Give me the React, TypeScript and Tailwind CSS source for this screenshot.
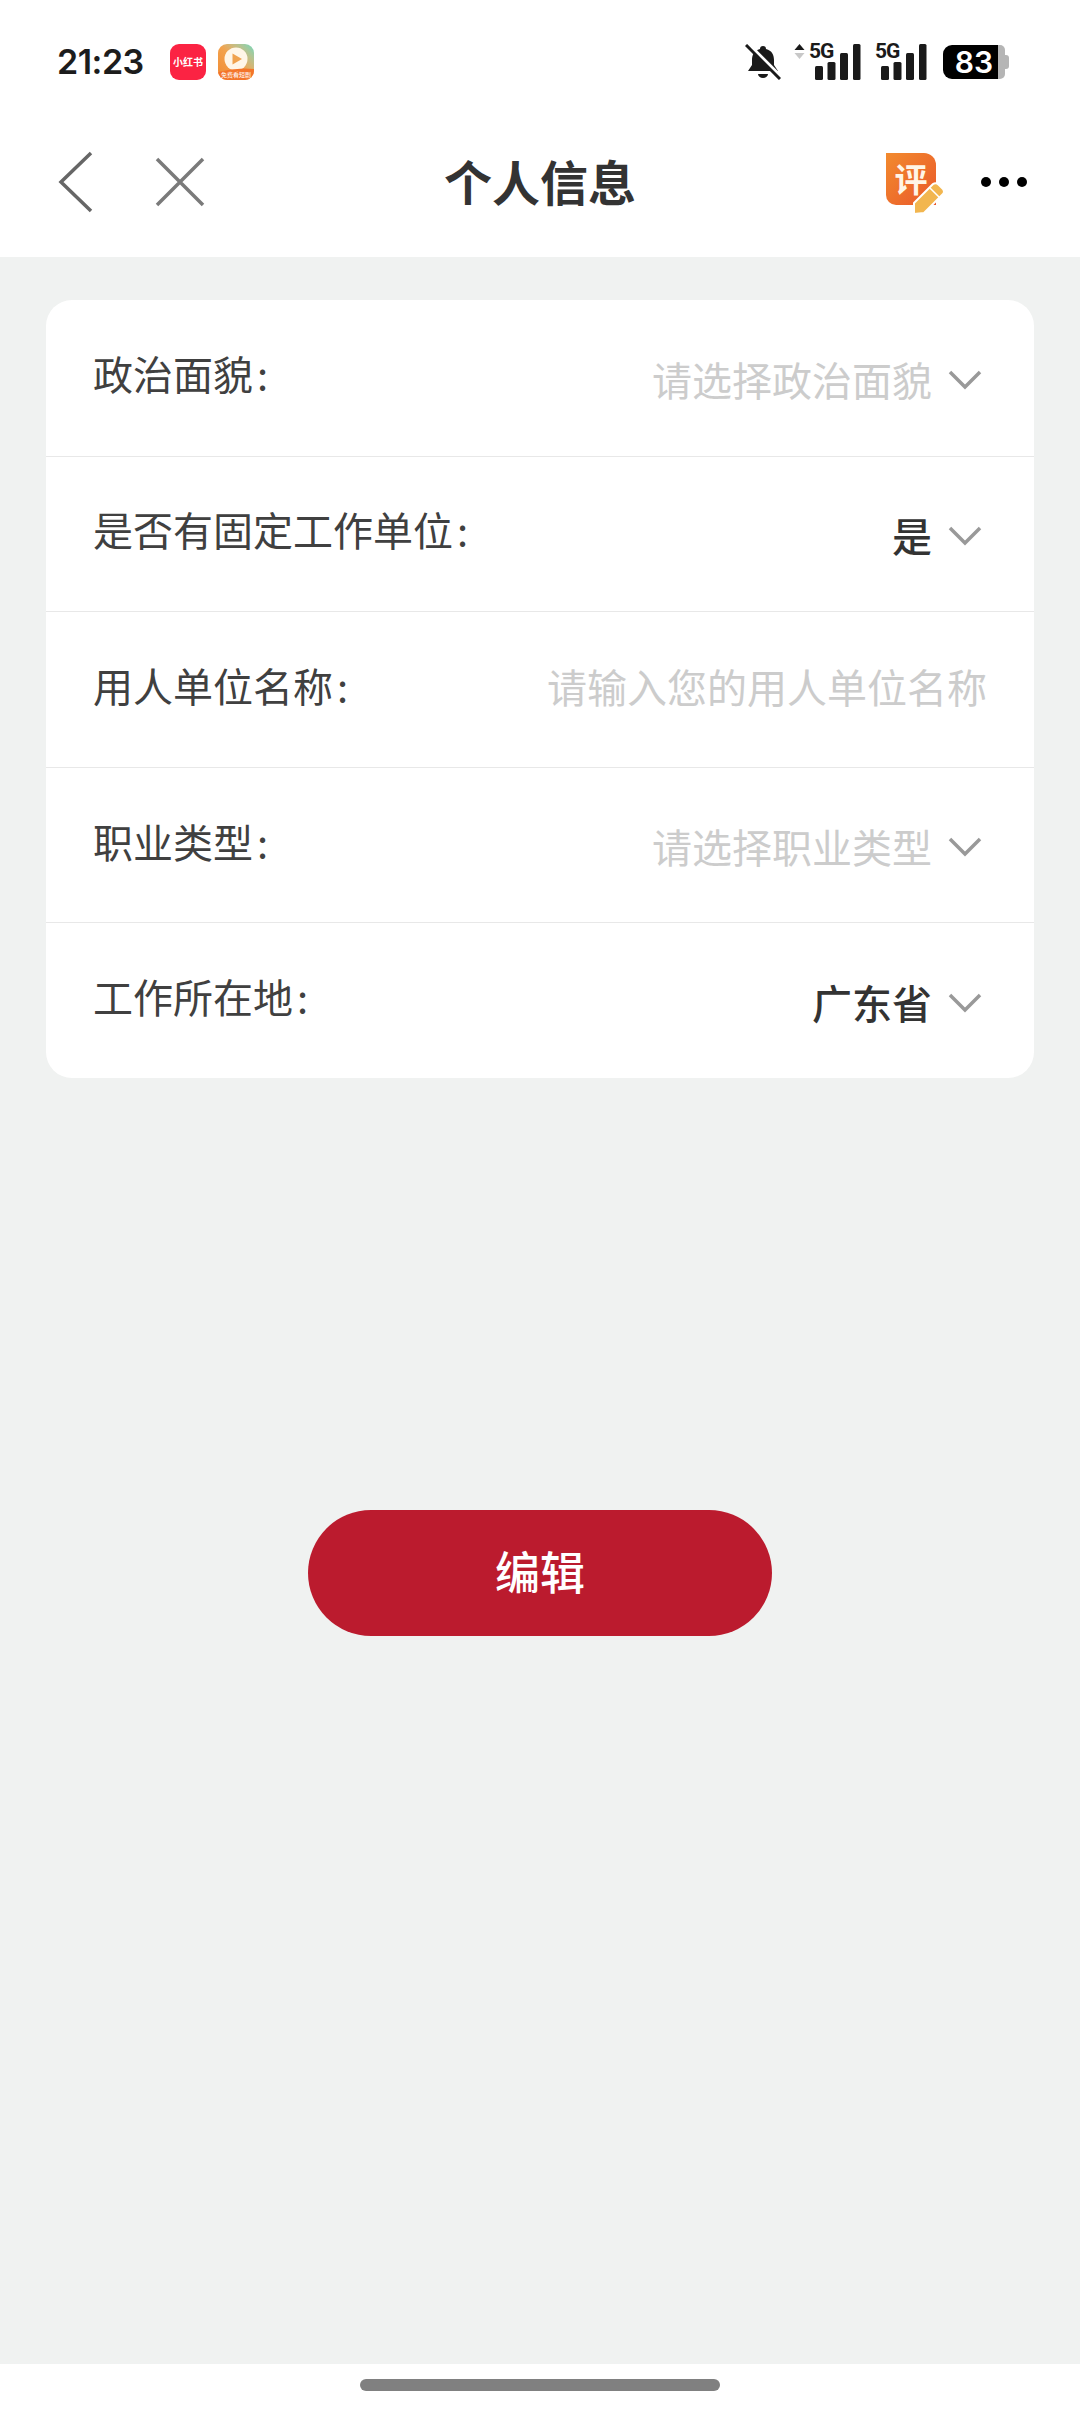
const CJK = "font-['Noto_Sans_CJK_SC',sans-serif]";

function Signal({ arrow }: { arrow?: boolean }) {
  return (
    <div className="relative w-[62px] h-[36px]">
      <svg className="absolute inset-0" width="62" height="36" viewBox="0 0 62 36">
        <rect x="6" y="22" width="8" height="14" rx="1.5" fill="#1a1a1a" />
        <rect x="18.500" y="18" width="8" height="18" rx="1.5" fill="#1a1a1a" />
        <rect x="31" y="9" width="8" height="27" rx="1.5" fill="#1a1a1a" />
        <rect x="44" y="0" width="7.500" height="36" rx="1.5" fill="#1a1a1a" />
      </svg>
      <span className="absolute left-0 top-[-3px] text-[21px] leading-[20px] font-bold text-[#1a1a1a] font-['Roboto',sans-serif] tracking-[-1px] bg-white pr-[1px]">
        5G
      </span>
      {arrow && (
        <svg className="absolute left-[-15px] top-0" width="11" height="15" viewBox="0 0 11 15">
          <path d="M5.500 0 L10.500 6 H0.500 Z" fill="#1a1a1a" />
          <path d="M5.500 15 L10.500 9 H0.500 Z" fill="#c8c8c8" />
        </svg>
      )}
    </div>
  );
}

function StatusBar() {
  return (
    <div className="h-[115px] flex items-center pl-[57px] pr-[71px] pt-[9px] bg-white">
      <span className="text-[34px] leading-none font-semibold text-[#1c1c1c] font-['Inter',sans-serif] tracking-[-0.5px] w-[113px]">
        21:23
      </span>
      <div className="w-[36px] h-[36px] rounded-[9px] bg-[#fb2343] flex items-center justify-center overflow-hidden">
        <span className={`text-[10px] leading-none font-bold text-white whitespace-nowrap ${CJK}`}>小红书</span>
      </div>
      <div className="relative ml-[12px] w-[36px] h-[36px] rounded-[9px] overflow-hidden bg-gradient-to-bl from-[#66d8bd] via-[#f3a24c] to-[#f08a32]">
        <svg className="absolute inset-0" width="36" height="36" viewBox="0 0 36 36">
          <circle cx="18" cy="15" r="11.500" fill="#fff6e8" />
          <path d="M14.500 9.500 L24 15 L14.500 20.500 Z" fill="#f0a24e" />
          <path d="M0 28 Q18 23 36 25 V36 H0 Z" fill="#f4752a" />
        </svg>
        <span className={`absolute left-0 right-0 bottom-[1px] text-center text-[6px] leading-[8px] text-white whitespace-nowrap ${CJK}`}>
          免费看短剧
        </span>
      </div>
      <div className="ml-auto flex items-center">
        <svg width="36" height="36" viewBox="0 0 36 36">
          <path d="M18 2 a3 3 0 0 1 3 3 c6 1.500 8 6 8 11 v5 l4 6 H3 l4 -6 v-5 c0 -5 2 -9.500 8 -11 a3 3 0 0 1 3 -3 Z" fill="#1a1a1a" />
          <path d="M13 30 h10 a5 4 0 0 1 -10 0 Z" fill="#1a1a1a" />
          <path d="M3 0 L35 32" stroke="#ffffff" strokeWidth="4" />
          <path d="M1 1 L35 35" stroke="#1a1a1a" strokeWidth="3" />
        </svg>
        <div className="ml-[28px]">
          <Signal arrow />
        </div>
        <div className="ml-[4px]">
          <Signal />
        </div>
        <div className="ml-[6px] flex items-center">
          <div className="w-[55px] h-[34px] bg-black rounded-l-[9px] flex items-center justify-end pr-[5px]">
            <span className="text-[30px] leading-none font-semibold text-white font-['Inter',sans-serif]">83</span>
          </div>
          <div className="w-[7px] h-[34px] bg-[#b5b5b5] rounded-r-[5px]" />
          <div className="w-[4px] h-[14px] bg-[#b5b5b5] rounded-r-[3px]" />
        </div>
      </div>
    </div>
  );
}

function NavBar() {
  return (
    <div className="h-[142px] flex items-center pl-[58px] pr-[52px] pb-[9px] bg-white">
      <div className="flex-1 flex items-center">
        <svg width="36" height="62" viewBox="0 0 36 62">
          <path d="M33 2 L3 31 L33 60" fill="none" stroke="#666666" strokeWidth="3.500" />
        </svg>
        <svg className="ml-[60px]" width="52" height="52" viewBox="0 0 52 52">
          <path d="M3 3 L49 49 M49 3 L3 49" fill="none" stroke="#7a7a7a" strokeWidth="3.500" />
        </svg>
      </div>
      <h1 className={`text-[48px] leading-none font-bold text-[#333333] mr-[6px] mt-[-3px] ${CJK}`}>个人信息</h1>
      <div className="flex-1 flex items-center justify-end">
        <div className="relative w-[57px] h-[62px] mt-[4px]">
          <div className="absolute left-0 top-0 w-[50px] h-[52px] rounded-tr-[12px] rounded-bl-[10px] bg-gradient-to-br from-[#f28a2e] to-[#e9562a] flex items-center justify-center">
            <span className={`text-[33px] leading-none font-bold text-[#fff5e6] ${CJK}`}>评</span>
          </div>
          <svg className="absolute left-[25px] top-[28px]" width="34" height="34" viewBox="0 0 34 34">
            <path d="M3 33 L3 22 L22 3 Q25 1 28 4 L32 8 Q34 11 32 13 L13 32 Z" fill="#f2b64f" stroke="#ffffff" strokeWidth="2" strokeLinejoin="round" />
            <path d="M19 7 L29 17" stroke="#ffffff" strokeWidth="1.500" />
          </svg>
        </div>
        <svg className="ml-[37px]" width="48" height="12" viewBox="0 0 48 12">
          <circle cx="6" cy="6" r="5" fill="#000000" />
          <circle cx="24" cy="6" r="5" fill="#000000" />
          <circle cx="42" cy="6" r="5" fill="#000000" />
        </svg>
      </div>
    </div>
  );
}

function Chevron() {
  return (
    <svg className="ml-[16px] mr-[5px] mt-[2px] shrink-0" width="34" height="20" viewBox="0 0 34 20">
      <path d="M2 2 L17 17 L32 2" fill="none" stroke="#999999" strokeWidth="3.500" />
    </svg>
  );
}

const rows = [
  { label: "政治面貌", value: "请选择政治面貌", placeholder: true, select: true },
  { label: "是否有固定工作单位", value: "是", select: true },
  { label: "用人单位名称", value: "请输入您的用人单位名称", placeholder: true },
  { label: "职业类型", value: "请选择职业类型", placeholder: true, select: true },
  { label: "工作所在地", value: "广东省", select: true },
];

export default function App() {
  return (
    <div className={`w-[1080px] h-[2412px] flex flex-col bg-[#f0f2f1] ${CJK}`}>
      <StatusBar />
      <NavBar />
      <main className="flex-1 px-[46px] pt-[43px] flex flex-col">
        <div className="bg-white rounded-[26px] overflow-hidden">
          {rows.map((row, i) => (
            <div
              key={row.label}
              className={`h-[155.6px] flex items-center justify-between pl-[47px] pr-[47px] ${i > 0 ? "border-t border-[#e8e8e8]" : ""}`}
            >
              <span className="text-[40px] leading-none text-[#404040] mt-[-9px]">
                {row.label}
                <span className="ml-[4px]">:</span>
              </span>
              <div className={`flex items-center ${row.select ? "mt-[2px]" : "mt-[-6px]"}`}>
                <span className={`text-[40px] leading-none ${row.placeholder ? "text-[#cccccc]" : "font-medium text-[#333333]"}`}>
                  {row.value}
                </span>
                {row.select && <Chevron />}
              </div>
            </div>
          ))}
        </div>
        <button className="mt-[432px] self-center w-[464px] h-[126px] pb-[4px] rounded-full bg-[#bb1b2e] text-white text-[45px] font-medium">
          编辑
        </button>
      </main>
      <div className="h-[48px] bg-white flex justify-center pt-[15px]">
        <div className="w-[360px] h-[12px] rounded-full bg-[#808080]" />
      </div>
    </div>
  );
}
